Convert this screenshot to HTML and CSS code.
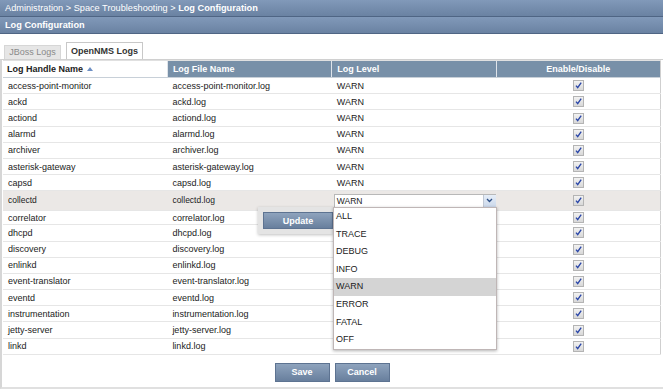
FILE: index.html
```html
<!DOCTYPE html>
<html lang="en">
<head>
  <meta charset="UTF-8">
  <title>Log Configuration</title>
  <link rel="stylesheet" href="styles.css">
</head>
<body>
  <div class="crumbs">Administration &gt; Space Troubleshooting &gt; <b>Log Configuration</b></div>
  <div class="titlebar">Log Configuration</div>

  <div class="content">
    <div class="tabs">
      <div class="tab">JBoss Logs</div>
      <div class="tab active">OpenNMS Logs</div>
    </div>

    <div class="panel">
      <div class="grid-wrap">
        <table class="grid">
          <thead>
            <tr>
              <th class="sorted">Log Handle Name <span class="sort-arrow"></span></th>
              <th>Log File Name</th>
              <th>Log Level</th>
              <th class="center">Enable/Disable</th>
            </tr>
          </thead>
          <tbody>
            <tr><td>access-point-monitor</td><td>access-point-monitor.log</td><td>WARN</td><td class="center"><span class="check"></span></td></tr>
            <tr><td>ackd</td><td>ackd.log</td><td>WARN</td><td class="center"><span class="check"></span></td></tr>
            <tr><td>actiond</td><td>actiond.log</td><td>WARN</td><td class="center"><span class="check"></span></td></tr>
            <tr><td>alarmd</td><td>alarmd.log</td><td>WARN</td><td class="center"><span class="check"></span></td></tr>
            <tr><td>archiver</td><td>archiver.log</td><td>WARN</td><td class="center"><span class="check"></span></td></tr>
            <tr><td>asterisk-gateway</td><td>asterisk-gateway.log</td><td>WARN</td><td class="center"><span class="check"></span></td></tr>
            <tr><td>capsd</td><td>capsd.log</td><td>WARN</td><td class="center"><span class="check"></span></td></tr>
            <tr class="editing">
              <td>collectd</td>
              <td>collectd.log</td>
              <td>
                <div class="select">
                  <span>WARN</span>
                  <span class="select-btn">
                    <svg width="7" height="5" viewBox="0 0 7 5"><path d="M1 1l2.5 2.5L6 1" fill="none" stroke="#2d4f86" stroke-width="1.3"/></svg>
                  </span>
                </div>
              </td>
              <td class="center"><span class="check"></span></td>
            </tr>
            <tr class="under-editor"><td>correlator</td><td>correlator.log</td><td>WARN</td><td class="center"><span class="check"></span></td></tr>
            <tr><td>dhcpd</td><td>dhcpd.log</td><td>WARN</td><td class="center"><span class="check"></span></td></tr>
            <tr><td>discovery</td><td>discovery.log</td><td>WARN</td><td class="center"><span class="check"></span></td></tr>
            <tr><td>enlinkd</td><td>enlinkd.log</td><td>WARN</td><td class="center"><span class="check"></span></td></tr>
            <tr><td>event-translator</td><td>event-translator.log</td><td>WARN</td><td class="center"><span class="check"></span></td></tr>
            <tr><td>eventd</td><td>eventd.log</td><td>WARN</td><td class="center"><span class="check"></span></td></tr>
            <tr><td>instrumentation</td><td>instrumentation.log</td><td>WARN</td><td class="center"><span class="check"></span></td></tr>
            <tr><td>jetty-server</td><td>jetty-server.log</td><td>WARN</td><td class="center"><span class="check"></span></td></tr>
            <tr><td>linkd</td><td>linkd.log</td><td>WARN</td><td class="center"><span class="check"></span></td></tr>
          </tbody>
        </table>

        <div class="row-editor">
          <button class="btn">Update</button>
        </div>

        <ul class="dropdown">
          <li>ALL</li>
          <li>TRACE</li>
          <li>DEBUG</li>
          <li>INFO</li>
          <li class="hover">WARN</li>
          <li>ERROR</li>
          <li>FATAL</li>
          <li>OFF</li>
        </ul>
      </div>

      <div class="footer">
        <button class="btn wide">Save</button>
        <button class="btn wide">Cancel</button>
      </div>
    </div>
  </div>
</body>
</html>
```

FILE: styles.css
```css
body {
  margin: 0;
  font-family: "Liberation Sans", Arial, sans-serif;
  font-size: 9px;
  color: #222;
  background-color: #fff;
}

.crumbs,
.titlebar {
  height: 16px;
  line-height: 16px;
  padding-left: 5px;
  color: #fff;
  font-size: 9.2px;
  background: linear-gradient(#8199b9, #6a82a2);
  border-bottom: 1px solid #4f6584;
}

.titlebar {
  font-weight: bold;
}

.content {
  padding-top: 8px;
}

.tabs {
  display: flex;
  align-items: flex-end;
  gap: 5px;
  padding-left: 4px;
  height: 17px;
}

.tab {
  width: 55px;
  height: 13px;
  line-height: 13px;
  text-align: center;
  color: #8a8a8a;
  background-color: #e6e6e6;
  border: 1px solid #d6d6d6;
  border-bottom: none;
}

.tab.active {
  width: 75px;
  height: 16px;
  line-height: 16px;
  color: #333;
  font-weight: bold;
  background-color: #fff;
  border-color: #c8c8c8;
}

.panel {
  border-top: 1px solid #d0d0d0;
  border-left: 2px solid #d6d6d6;
  border-bottom: 2px solid #e0e0e0;
  padding-left: 1px;
  padding-right: 2px;
}

.grid-wrap {
  position: relative;
  border-top: 1px solid #e0e0e0;
}

.grid {
  width: 100%;
  table-layout: fixed;
  border-collapse: collapse;
  border-right: 1px solid #cfcfcf;
}

.grid th {
  height: 16px;
  padding: 0 5px;
  text-align: left;
  color: #fff;
  font-weight: bold;
  background-color: #7890a8;
  border-left: 1px solid #dfe4ea;
  border-bottom: 1px solid #c8d0d8;
}

.grid th.sorted {
  padding-left: 4px;
  color: #222;
  background-color: #fff;
  border-left: none;
}

.grid th.center,
.grid td.center {
  text-align: center;
}

.sort-arrow {
  display: inline-block;
  width: 0;
  height: 0;
  margin-left: 1px;
  vertical-align: 1px;
  border-left: 3px solid transparent;
  border-right: 3px solid transparent;
  border-bottom: 4px solid #6d8fc4;
}

.grid td {
  height: 15.2px;
  padding: 0 5px;
  white-space: nowrap;
  border-bottom: 1px solid #e6e6e6;
}

.grid td:first-child {
  padding-left: 5px;
}

.grid tr.editing td {
  height: 18px;
  font-size: 8.5px;
  background-color: #ebe8e6;
  padding-bottom: 1px;
}

.grid tr.editing td:nth-child(3) {
  padding: 0 0 0 2px;
}

.grid tr.under-editor td {
  height: 13px;
}

.check {
  display: inline-block;
  width: 9px;
  height: 9px;
  vertical-align: middle;
  border: 1px solid #b4b4b4;
  background-image: url("data:image/svg+xml,%3Csvg xmlns='http://www.w3.org/2000/svg' width='9' height='9'%3E%3Cpath d='M2 4.6l1.7 2L7.2 1.6' fill='none' stroke='%232a46a8' stroke-width='1.4'/%3E%3C/svg%3E"), linear-gradient(#f2f2f2, #d8d8d8);
}

.select {
  display: flex;
  align-items: center;
  justify-content: space-between;
  width: 163px;
  height: 14px;
  box-sizing: border-box;
  font-size: 8.5px;
  padding-left: 2px;
  background-color: #fff;
  border: 1px solid #b8b8b8;
}

.select-btn {
  display: flex;
  align-items: center;
  justify-content: center;
  width: 12px;
  height: 12px;
  background: linear-gradient(#e6eef8, #cbd8ea);
  border-left: 1px solid #c0c8d4;
}

.row-editor {
  position: absolute;
  left: 255px;
  top: 146px;
  width: 75px;
  height: 27px;
  display: flex;
  align-items: center;
  justify-content: flex-end;
  background-color: #e4e4e4;
  box-shadow: 0 1px 3px rgba(0, 0, 0, 0.25);
}

.btn {
  padding: 0;
  font-family: "Liberation Sans", Arial, sans-serif;
  font-size: 9px;
  font-weight: bold;
  color: #fff;
  border: 1px solid #5d7391;
  background: linear-gradient(#8ea3bd, #687f9d);
  cursor: pointer;
}

.row-editor .btn {
  width: 70px;
  height: 17px;
}

.dropdown {
  position: absolute;
  left: 330px;
  top: 146px;
  width: 162px;
  margin: 0;
  padding: 0;
  list-style: none;
  background-color: #fff;
  border: 1px solid #bfb6b6;
  box-shadow: 0 1px 3px rgba(0, 0, 0, 0.3);
}

.dropdown li {
  height: 17.6px;
  line-height: 17.6px;
  padding-left: 2px;
}

.dropdown li.hover {
  background-color: #d4d4d4;
}

.footer {
  display: flex;
  justify-content: center;
  gap: 5px;
  padding: 8px 0 5px;
}

.btn.wide {
  width: 55px;
  height: 19px;
}
```
